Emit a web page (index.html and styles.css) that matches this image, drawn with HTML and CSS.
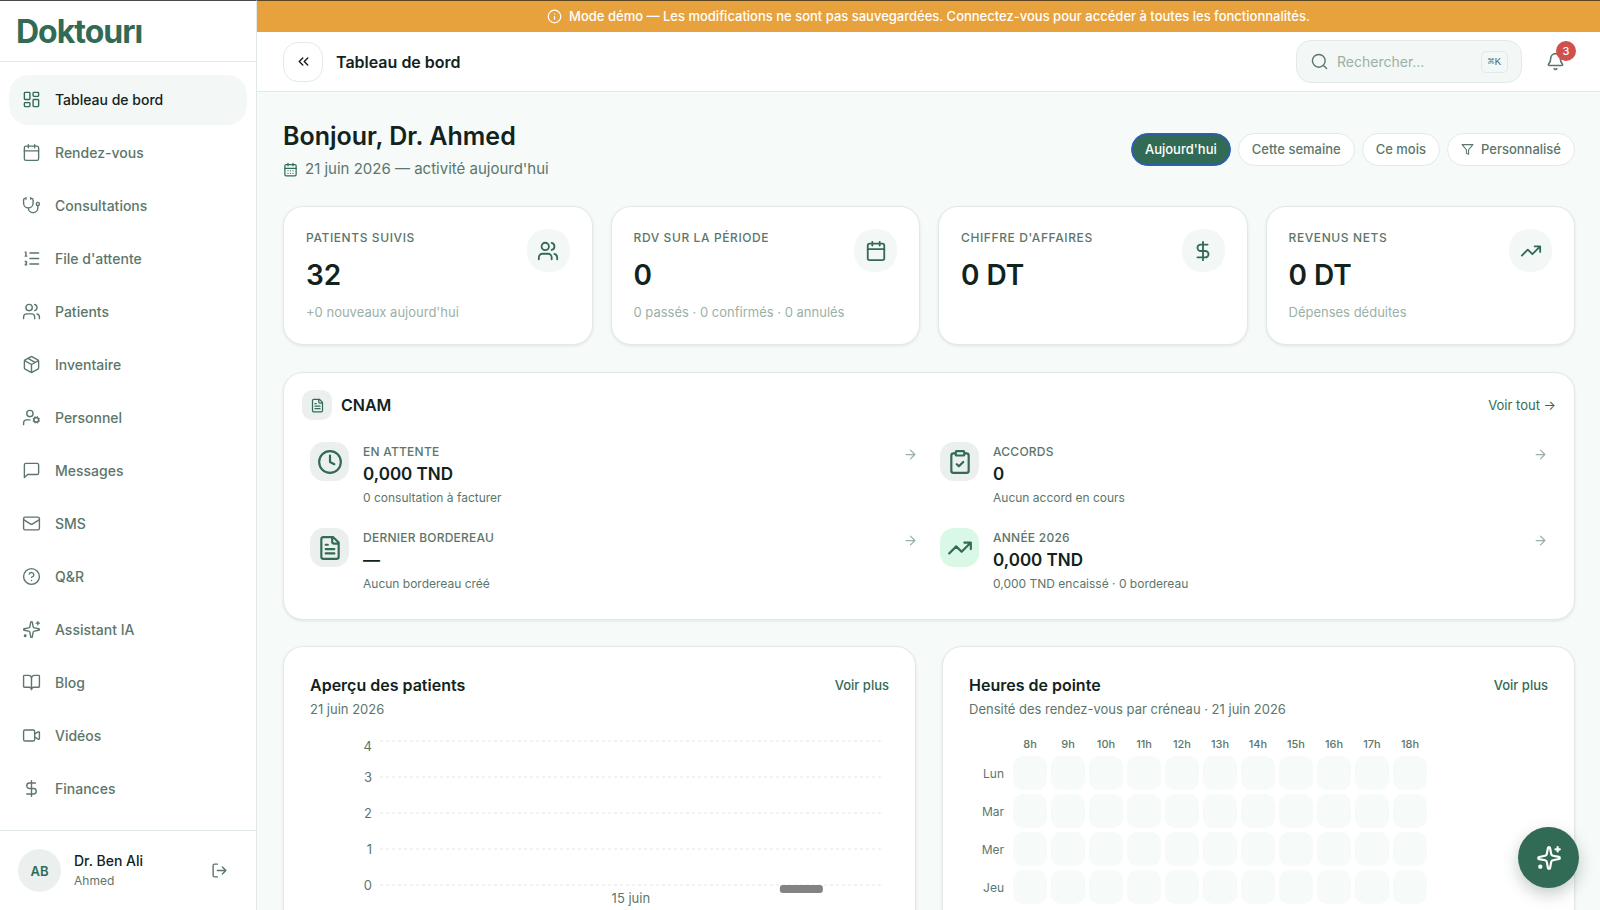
FILE: index.html
```html
<!DOCTYPE html>
<html lang="fr">
<head>
  <meta charset="UTF-8">
  <meta name="viewport" content="width=device-width, initial-scale=1">
  <title>Doktouri - Tableau de bord</title>
  <link rel="stylesheet" href="styles.css">
</head>
<body>
  <svg class="sprite" aria-hidden="true">
    <symbol id="i-dashboard" viewBox="0 0 24 24"><rect x="3" y="3" width="7" height="9" rx="1"/><rect x="14" y="3" width="7" height="5" rx="1"/><rect x="14" y="12" width="7" height="9" rx="1"/><rect x="3" y="16" width="7" height="5" rx="1"/></symbol>
    <symbol id="i-calendar" viewBox="0 0 24 24"><path d="M8 2v4M16 2v4M3 10h18"/><rect x="3" y="4" width="18" height="18" rx="2"/></symbol>
    <symbol id="i-calendar-days" viewBox="0 0 24 24"><path d="M8 2v4M16 2v4M3 10h18M8 14h.01M12 14h.01M16 14h.01M8 18h.01M12 18h.01M16 18h.01"/><rect x="3" y="4" width="18" height="18" rx="2"/></symbol>
    <symbol id="i-stethoscope" viewBox="0 0 24 24"><path d="M11 2v2M5 2v2M5 3H4a2 2 0 0 0-2 2v4a6 6 0 0 0 12 0V5a2 2 0 0 0-2-2h-1M8 15a6 6 0 0 0 12 0v-3"/><circle cx="20" cy="10" r="2"/></symbol>
    <symbol id="i-list" viewBox="0 0 24 24"><path d="M10 5h11M10 12h11M10 19h11M4 4h1v5M4 9h2M6 20H4c0-1 2-2 2-3s-1-2-2-1"/></symbol>
    <symbol id="i-users" viewBox="0 0 24 24"><path d="M16 21v-2a4 4 0 0 0-4-4H6a4 4 0 0 0-4 4v2M22 21v-2a4 4 0 0 0-3-3.87M16 3.13a4 4 0 0 1 0 7.75"/><circle cx="9" cy="7" r="4"/></symbol>
    <symbol id="i-package" viewBox="0 0 24 24"><path d="M11 21.73a2 2 0 0 0 2 0l7-4A2 2 0 0 0 21 16V8a2 2 0 0 0-1-1.73l-7-4a2 2 0 0 0-2 0l-7 4A2 2 0 0 0 3 8v8a2 2 0 0 0 1 1.73zM12 22V12M3.29 7 12 12l8.71-5M7.5 4.27l9 5.15"/></symbol>
    <symbol id="i-user-cog" viewBox="0 0 24 24"><circle cx="10" cy="7" r="4"/><path d="M10 15H6a4 4 0 0 0-4 4v2"/><circle cx="18" cy="15" r="3"/><path d="m21.7 16.4-.9-.3M15.2 13.9l-.9-.3M16.6 18.7l.3-.9M19.1 12.2l.3-.9M19.6 18.7l-.4-1M16.8 12.3l-.4-1M14.3 16.6l1-.4M20.7 13.8l1-.4"/></symbol>
    <symbol id="i-message" viewBox="0 0 24 24"><path d="M21 15a2 2 0 0 1-2 2H7l-4 4V5a2 2 0 0 1 2-2h14a2 2 0 0 1 2 2z"/></symbol>
    <symbol id="i-mail" viewBox="0 0 24 24"><rect x="2" y="4" width="20" height="16" rx="2"/><path d="m22 7-8.97 5.7a1.94 1.94 0 0 1-2.06 0L2 7"/></symbol>
    <symbol id="i-help" viewBox="0 0 24 24"><circle cx="12" cy="12" r="10"/><path d="M9.09 9a3 3 0 0 1 5.83 1c0 2-3 3-3 3M12 17h.01"/></symbol>
    <symbol id="i-sparkles" viewBox="0 0 24 24"><path d="M11.02 2.81a1 1 0 0 1 1.96 0l1.05 5.56a2 2 0 0 0 1.6 1.6l5.56 1.05a1 1 0 0 1 0 1.96l-5.56 1.05a2 2 0 0 0-1.6 1.6l-1.05 5.56a1 1 0 0 1-1.96 0l-1.05-5.56a2 2 0 0 0-1.6-1.6l-5.56-1.05a1 1 0 0 1 0-1.96l5.56-1.05a2 2 0 0 0 1.6-1.6zM20 2v4M22 4h-4"/><circle cx="4" cy="20" r="1"/></symbol>
    <symbol id="i-book" viewBox="0 0 24 24"><path d="M12 7v14M3 18a1 1 0 0 1-1-1V4a1 1 0 0 1 1-1h5a4 4 0 0 1 4 4 4 4 0 0 1 4-4h5a1 1 0 0 1 1 1v13a1 1 0 0 1-1 1h-6a3 3 0 0 0-3 3 3 3 0 0 0-3-3z"/></symbol>
    <symbol id="i-video" viewBox="0 0 24 24"><path d="m16 10 4.55-2.6A1 1 0 0 1 22 8.3v7.4a1 1 0 0 1-1.45.9L16 14"/><rect x="2" y="5" width="14" height="14" rx="2"/></symbol>
    <symbol id="i-dollar" viewBox="0 0 24 24"><path d="M12 2v20M17 5H9.5a3.5 3.5 0 0 0 0 7h5a3.5 3.5 0 0 1 0 7H6"/></symbol>
    <symbol id="i-logout" viewBox="0 0 24 24"><path d="M9 21H5a2 2 0 0 1-2-2V5a2 2 0 0 1 2-2h4M16 17l5-5-5-5M21 12H9"/></symbol>
    <symbol id="i-info" viewBox="0 0 24 24"><circle cx="12" cy="12" r="10"/><path d="M12 16v-4M12 8h.01"/></symbol>
    <symbol id="i-chevrons" viewBox="0 0 24 24"><path d="m11 17-5-5 5-5M18 17l-5-5 5-5"/></symbol>
    <symbol id="i-search" viewBox="0 0 24 24"><circle cx="11" cy="11" r="9"/><path d="m22 22-4.3-4.3"/></symbol>
    <symbol id="i-bell" viewBox="0 0 24 24"><path d="M10.27 21a2 2 0 0 0 3.46 0M3.26 15.33A1 1 0 0 0 4 17h16a1 1 0 0 0 .74-1.67C19.41 13.96 18 12.5 18 8A6 6 0 0 0 6 8c0 4.5-1.41 5.96-2.74 7.33"/></symbol>
    <symbol id="i-filter" viewBox="0 0 24 24"><path d="M22 3H2l8 9.46V19l4 2v-8.54z"/></symbol>
    <symbol id="i-trend" viewBox="0 0 24 24"><path d="M16 7h6v6M22 7l-8.5 8.5-5-5L2 17"/></symbol>
    <symbol id="i-file" viewBox="0 0 24 24"><path d="M15 2H6a2 2 0 0 0-2 2v16a2 2 0 0 0 2 2h12a2 2 0 0 0 2-2V7zM14 2v4a2 2 0 0 0 2 2h4M10 9H8M16 13H8M16 17H8"/></symbol>
    <symbol id="i-clock" viewBox="0 0 24 24"><circle cx="12" cy="12" r="10"/><path d="M12 6v6l4 2"/></symbol>
    <symbol id="i-clipboard" viewBox="0 0 24 24"><rect x="8" y="2" width="8" height="4" rx="1"/><path d="M16 4h2a2 2 0 0 1 2 2v14a2 2 0 0 1-2 2H6a2 2 0 0 1-2-2V6a2 2 0 0 1 2-2h2M9 14l2 2 4-4"/></symbol>
    <symbol id="i-arrow" viewBox="0 0 24 24"><path d="M5 12h14M12 5l7 7-7 7"/></symbol>
  </svg>

  <div class="app">
    <aside class="sidebar">
      <div class="brand"><a href="#" class="logo">Doktourı</a></div>
      <nav class="nav">
        <a href="#" class="nav-item active"><svg class="icon"><use href="#i-dashboard"/></svg>Tableau de bord</a>
        <a href="#" class="nav-item"><svg class="icon"><use href="#i-calendar"/></svg>Rendez-vous</a>
        <a href="#" class="nav-item"><svg class="icon"><use href="#i-stethoscope"/></svg>Consultations</a>
        <a href="#" class="nav-item"><svg class="icon"><use href="#i-list"/></svg>File d'attente</a>
        <a href="#" class="nav-item"><svg class="icon"><use href="#i-users"/></svg>Patients</a>
        <a href="#" class="nav-item"><svg class="icon"><use href="#i-package"/></svg>Inventaire</a>
        <a href="#" class="nav-item"><svg class="icon"><use href="#i-user-cog"/></svg>Personnel</a>
        <a href="#" class="nav-item"><svg class="icon"><use href="#i-message"/></svg>Messages</a>
        <a href="#" class="nav-item"><svg class="icon"><use href="#i-mail"/></svg>SMS</a>
        <a href="#" class="nav-item"><svg class="icon"><use href="#i-help"/></svg>Q&amp;R</a>
        <a href="#" class="nav-item"><svg class="icon"><use href="#i-sparkles"/></svg>Assistant IA</a>
        <a href="#" class="nav-item"><svg class="icon"><use href="#i-book"/></svg>Blog</a>
        <a href="#" class="nav-item"><svg class="icon"><use href="#i-video"/></svg>Vidéos</a>
        <a href="#" class="nav-item"><svg class="icon"><use href="#i-dollar"/></svg>Finances</a>
      </nav>
      <div class="user">
        <span class="avatar">AB</span>
        <div class="user-info">
          <div class="user-name">Dr. Ben Ali</div>
          <div class="user-sub">Ahmed</div>
        </div>
        <button class="icon-btn" aria-label="Se déconnecter"><svg class="icon"><use href="#i-logout"/></svg></button>
      </div>
    </aside>

    <div class="content">
      <div class="banner">
        <svg class="icon"><use href="#i-info"/></svg>
        <span>Mode démo — Les modifications ne sont pas sauvegardées. Connectez-vous pour accéder à toutes les fonctionnalités.</span>
      </div>

      <header class="topbar">
        <button class="toggle" aria-label="Réduire le menu"><svg class="icon"><use href="#i-chevrons"/></svg></button>
        <div class="topbar-title">Tableau de bord</div>
        <label class="search">
          <svg class="icon"><use href="#i-search"/></svg>
          <input type="text" placeholder="Rechercher..." aria-label="Rechercher">
          <kbd>⌘K</kbd>
        </label>
        <button class="icon-btn bell" aria-label="Notifications"><svg class="icon"><use href="#i-bell"/></svg><span class="badge">3</span></button>
      </header>

      <main class="main">
        <div class="page-head">
          <div>
            <h1>Bonjour, Dr. Ahmed</h1>
            <p class="date"><svg class="icon"><use href="#i-calendar-days"/></svg>21 juin 2026 — activité aujourd'hui</p>
          </div>
          <div class="filters">
            <button class="pill selected">Aujourd'hui</button>
            <button class="pill">Cette semaine</button>
            <button class="pill">Ce mois</button>
            <button class="pill"><svg class="icon"><use href="#i-filter"/></svg>Personnalisé</button>
          </div>
        </div>

        <section class="stats">
          <article class="card stat">
            <div>
              <div class="label">Patients suivis</div>
              <div class="stat-value">32</div>
              <div class="stat-note">+0 nouveaux aujourd'hui</div>
            </div>
            <span class="stat-icon"><svg class="icon"><use href="#i-users"/></svg></span>
          </article>
          <article class="card stat">
            <div>
              <div class="label">RDV sur la période</div>
              <div class="stat-value">0</div>
              <div class="stat-note">0 passés · 0 confirmés · 0 annulés</div>
            </div>
            <span class="stat-icon"><svg class="icon"><use href="#i-calendar"/></svg></span>
          </article>
          <article class="card stat">
            <div>
              <div class="label">Chiffre d'affaires</div>
              <div class="stat-value">0 DT</div>
            </div>
            <span class="stat-icon"><svg class="icon"><use href="#i-dollar"/></svg></span>
          </article>
          <article class="card stat">
            <div>
              <div class="label">Revenus nets</div>
              <div class="stat-value">0 DT</div>
              <div class="stat-note">Dépenses déduites</div>
            </div>
            <span class="stat-icon"><svg class="icon"><use href="#i-trend"/></svg></span>
          </article>
        </section>

        <section class="card cnam">
          <div class="cnam-head">
            <span class="cnam-badge"><svg class="icon"><use href="#i-file"/></svg></span>
            <h2>CNAM</h2>
            <a href="#" class="link">Voir tout →</a>
          </div>
          <div class="cnam-grid">
            <a href="#" class="cnam-item">
              <span class="tile"><svg class="icon"><use href="#i-clock"/></svg></span>
              <div class="cnam-text">
                <div class="label tight">En attente</div>
                <div class="cnam-value">0,000 TND</div>
                <div class="cnam-note">0 consultation à facturer</div>
              </div>
              <svg class="icon arrow"><use href="#i-arrow"/></svg>
            </a>
            <a href="#" class="cnam-item">
              <span class="tile"><svg class="icon"><use href="#i-clipboard"/></svg></span>
              <div class="cnam-text">
                <div class="label tight">Accords</div>
                <div class="cnam-value">0</div>
                <div class="cnam-note">Aucun accord en cours</div>
              </div>
              <svg class="icon arrow"><use href="#i-arrow"/></svg>
            </a>
            <a href="#" class="cnam-item">
              <span class="tile"><svg class="icon"><use href="#i-file"/></svg></span>
              <div class="cnam-text">
                <div class="label tight">Dernier bordereau</div>
                <div class="cnam-value">—</div>
                <div class="cnam-note">Aucun bordereau créé</div>
              </div>
              <svg class="icon arrow"><use href="#i-arrow"/></svg>
            </a>
            <a href="#" class="cnam-item">
              <span class="tile green"><svg class="icon"><use href="#i-trend"/></svg></span>
              <div class="cnam-text">
                <div class="label tight">Année 2026</div>
                <div class="cnam-value">0,000 TND</div>
                <div class="cnam-note">0,000 TND encaissé · 0 bordereau</div>
              </div>
              <svg class="icon arrow"><use href="#i-arrow"/></svg>
            </a>
          </div>
        </section>

        <section class="panels">
          <article class="card panel">
            <div class="panel-head">
              <h2>Aperçu des patients</h2>
              <a href="#" class="link strong">Voir plus</a>
            </div>
            <p class="panel-sub">21 juin 2026</p>
            <svg class="chart" role="img" aria-label="Patients par jour">
              <g class="chart-grid">
                <line x1="70" x2="100%" y1="9" y2="9"/>
                <line x1="70" x2="100%" y1="45" y2="45"/>
                <line x1="70" x2="100%" y1="81" y2="81"/>
                <line x1="70" x2="100%" y1="117" y2="117"/>
                <line x1="70" x2="100%" y1="153" y2="153"/>
              </g>
              <g class="chart-y">
                <text x="62" y="19">4</text>
                <text x="62" y="50">3</text>
                <text x="62" y="86">2</text>
                <text x="62" y="122">1</text>
                <text x="62" y="158">0</text>
              </g>
              <text class="chart-x" x="56%" y="171">15 juin</text>
              <rect class="chart-bar" x="82%" y="153" width="43" height="8" rx="3"/>
            </svg>
          </article>

          <article class="card panel">
            <div class="panel-head">
              <h2>Heures de pointe</h2>
              <a href="#" class="link strong">Voir plus</a>
            </div>
            <p class="panel-sub">Densité des rendez-vous par créneau · 21 juin 2026</p>
            <table class="heatmap">
              <thead>
                <tr><td></td><th>8h</th><th>9h</th><th>10h</th><th>11h</th><th>12h</th><th>13h</th><th>14h</th><th>15h</th><th>16h</th><th>17h</th><th>18h</th></tr>
              </thead>
              <tbody>
                <tr><th>Lun</th><td></td><td></td><td></td><td></td><td></td><td></td><td></td><td></td><td></td><td></td><td></td></tr>
                <tr><th>Mar</th><td></td><td></td><td></td><td></td><td></td><td></td><td></td><td></td><td></td><td></td><td></td></tr>
                <tr><th>Mer</th><td></td><td></td><td></td><td></td><td></td><td></td><td></td><td></td><td></td><td></td><td></td></tr>
                <tr><th>Jeu</th><td></td><td></td><td></td><td></td><td></td><td></td><td></td><td></td><td></td><td></td><td></td></tr>
              </tbody>
            </table>
          </article>
        </section>
      </main>
    </div>
  </div>

  <button class="fab" aria-label="Assistant IA"><svg class="icon"><use href="#i-sparkles"/></svg></button>
</body>
</html>
```
FILE: styles.css
```css
:root {
  --green: #326b55;
  --ink: #12231d;
  --muted: #5c766b;
  --faint: #9bb0a7;
  --line: #e2eae7;
  --bg: #f6faf9;
  --soft: #f3f7f5;
}
* {
  box-sizing: border-box;
}
body {
  margin: 0;
  font-family: Inter, "Liberation Sans", sans-serif;
  font-size: 14px;
  color: var(--ink);
  background: var(--bg);
}
h1, h2, p {
  margin: 0;
}
a {
  color: inherit;
  text-decoration: none;
}
button {
  font: inherit;
  color: inherit;
  border: none;
  background: none;
  padding: 0;
  cursor: pointer;
}
.sprite {
  display: none;
}
.icon {
  width: 19px;
  height: 19px;
  flex: none;
  fill: none;
  stroke: currentColor;
  stroke-width: 2;
  stroke-linecap: round;
  stroke-linejoin: round;
}
.app {
  display: flex;
  height: 100vh;
}

/* sidebar */
.sidebar {
  width: 257px;
  flex: none;
  display: flex;
  flex-direction: column;
  background: #fff;
  border-right: 1px solid var(--line);
  border-top: 1px solid #4a4a4a;
}
.brand {
  height: 61px;
  display: flex;
  align-items: center;
  padding: 0 16px;
  border-bottom: 1px solid var(--line);
}
.logo {
  font-size: 32px;
  font-weight: 700;
  letter-spacing: -1px;
  color: var(--green);
}
.nav {
  flex: 1;
  display: flex;
  flex-direction: column;
  gap: 3px;
  padding: 13px 9px;
  overflow: hidden;
}
.nav-item {
  height: 50px;
  flex: none;
  display: flex;
  align-items: center;
  gap: 14px;
  padding: 0 13px 1px;
  border-radius: 20px;
  font-size: 14px;
  font-weight: 500;
  color: var(--muted);
}
.nav-item .icon {
  stroke-width: 1.75;
}
.nav-item.active {
  background: var(--soft);
  color: var(--ink);
}
.nav-item.active .icon {
  color: var(--green);
}
.user {
  height: 80px;
  display: flex;
  align-items: center;
  gap: 13px;
  padding: 0 28px 0 18px;
  border-top: 1px solid var(--line);
}
.avatar {
  width: 43px;
  height: 43px;
  display: grid;
  place-items: center;
  border-radius: 50%;
  background: #ebf0ee;
  color: var(--green);
  font-size: 13px;
  font-weight: 600;
}
.user-info {
  flex: 1;
}
.user-name {
  font-size: 14px;
  font-weight: 500;
  line-height: 20px;
}
.user-sub {
  font-size: 12px;
  line-height: 20px;
  color: var(--muted);
}
.icon-btn {
  display: flex;
  color: var(--muted);
}
.user .icon {
  width: 17px;
  height: 17px;
}

/* top of the page */
.content {
  flex: 1;
  min-width: 0;
  display: flex;
  flex-direction: column;
}
.banner {
  height: 32px;
  flex: none;
  display: flex;
  align-items: center;
  justify-content: center;
  gap: 7px;
  padding-bottom: 1px;
  background: #e8a23d;
  border-top: 1px solid #5b4520;
  color: #fff;
  font-size: 13px;
  font-weight: 500;
}
.banner .icon {
  width: 15px;
  height: 15px;
}
.topbar {
  height: 60px;
  flex: none;
  display: flex;
  align-items: center;
  padding: 0 25px 0 26px;
  background: #fff;
  border-bottom: 1px solid var(--line);
}
.toggle {
  width: 40px;
  height: 40px;
  display: grid;
  place-items: center;
  border: 1px solid var(--line);
  border-radius: 15px;
}
.toggle .icon {
  width: 17px;
  height: 17px;
}
.topbar-title {
  flex: 1;
  margin-left: 13px;
  font-size: 16px;
  font-weight: 600;
}
.search {
  width: 226px;
  height: 43px;
  display: flex;
  align-items: center;
  gap: 9px;
  padding: 0 13px 0 14px;
  background: var(--soft);
  border: 1px solid var(--line);
  border-radius: 15px;
  color: var(--muted);
}
.search .icon {
  width: 17px;
  height: 17px;
}
.search input {
  flex: 1;
  min-width: 0;
  padding: 0;
  border: none;
  outline: none;
  background: none;
  font: inherit;
  color: var(--ink);
}
.search input::placeholder {
  color: var(--faint);
}
.search kbd {
  padding: 2px 6px;
  border: 1px solid var(--line);
  border-radius: 5px;
  font-family: "Liberation Mono", "DejaVu Sans Mono", monospace;
  font-size: 11px;
  line-height: 16px;
}
.bell {
  position: relative;
  margin: 0 10px 0 24px;
}
.badge {
  position: absolute;
  top: -11px;
  right: -11px;
  width: 20px;
  height: 20px;
  border-radius: 50%;
  background: #d0504c;
  color: #fff;
  font-size: 11px;
  font-weight: 500;
  line-height: 20px;
}

/* main area */
.main {
  flex: 1;
  min-height: 0;
  overflow-y: auto;
  scrollbar-width: none;
  padding: 26px 25px 26px 26px;
}
.page-head {
  display: flex;
  align-items: center;
  justify-content: space-between;
  margin-bottom: 25px;
}
h1 {
  font-size: 25px;
  font-weight: 600;
  line-height: 36px;
}
.date {
  display: flex;
  align-items: center;
  gap: 7px;
  margin-top: 3px;
  font-size: 15px;
  line-height: 24px;
  color: var(--muted);
}
.date .icon {
  width: 15px;
  height: 15px;
  color: var(--green);
}
.filters {
  display: flex;
  gap: 7px;
}
.pill {
  height: 33px;
  display: flex;
  align-items: center;
  gap: 7px;
  padding: 0 13px 1px;
  background: #fff;
  border: 1px solid var(--line);
  border-radius: 17px;
  font-size: 13px;
  font-weight: 500;
  color: var(--muted);
}
.pill .icon {
  width: 13px;
  height: 13px;
}
.pill.selected {
  background: var(--green);
  border-color: #2c5fc4;
  box-shadow: inset 0 0 0 1px #2a5fa5;
  color: #fff;
}
.card {
  background: #fff;
  border: 1px solid var(--line);
  border-radius: 20px;
  box-shadow: 0 1px 3px rgba(18, 50, 38, 0.1);
}
.label {
  font-size: 12px;
  font-weight: 500;
  line-height: 18px;
  letter-spacing: 0.05em;
  text-transform: uppercase;
  color: var(--muted);
}
.label.tight {
  letter-spacing: 0.02em;
}

.stats {
  display: grid;
  grid-template-columns: repeat(4, 1fr);
  gap: 18px;
  margin-bottom: 27px;
}
.stat {
  height: 139px;
  display: flex;
  justify-content: space-between;
  padding: 22px;
}
.stat-value {
  margin-top: 10px;
  font-size: 28px;
  font-weight: 600;
  line-height: 36px;
}
.stat-note {
  margin-top: 10px;
  font-size: 13px;
  line-height: 18px;
  color: var(--faint);
}
.stat-icon {
  width: 43px;
  height: 43px;
  display: grid;
  place-items: center;
  border-radius: 20px;
  background: var(--soft);
  color: var(--green);
}
.stat-icon .icon {
  width: 22px;
  height: 22px;
}

.cnam {
  padding: 17px 18px 20px;
  margin-bottom: 26px;
}
.cnam-head {
  display: flex;
  align-items: center;
  gap: 9px;
  margin-bottom: 13px;
}
.cnam-badge {
  width: 30px;
  height: 30px;
  display: grid;
  place-items: center;
  border-radius: 10px;
  background: #ebf0ee;
  color: var(--green);
}
.cnam-badge .icon {
  width: 15px;
  height: 15px;
}
h2 {
  flex: 1;
  font-size: 16px;
  font-weight: 600;
  line-height: 24px;
}
.link {
  font-size: 13px;
  color: var(--green);
}
.link.strong {
  font-weight: 500;
}
.cnam-grid {
  display: grid;
  grid-template-columns: 1fr 1fr;
  gap: 6px;
}
.cnam-item {
  height: 80px;
  display: flex;
  gap: 14px;
  padding: 9px 8px;
}
.tile {
  width: 39px;
  height: 39px;
  display: grid;
  place-items: center;
  border-radius: 14px;
  background: #ebf0ee;
  color: var(--green);
}
.tile.green {
  background: #d9f8e6;
}
.tile .icon {
  width: 26px;
  height: 26px;
}
.cnam-text {
  flex: 1;
  padding-top: 1px;
}
.cnam-value {
  font-size: 17px;
  font-weight: 600;
  line-height: 27px;
}
.cnam-note {
  font-size: 12px;
  line-height: 20px;
  color: var(--muted);
}
.arrow {
  width: 15px;
  height: 15px;
  margin-top: 5px;
  color: var(--faint);
}

.panels {
  display: grid;
  grid-template-columns: 1fr 1fr;
  gap: 26px;
}
.panel {
  padding: 26px;
}
.panel-head {
  display: flex;
  align-items: center;
}
.panel-sub {
  margin-top: 2px;
  font-size: 13px;
  line-height: 20px;
  color: var(--muted);
}
.chart {
  display: block;
  width: 100%;
  height: 190px;
  margin-top: 13px;
  padding-right: 6px;
  font-size: 13px;
}
.chart text {
  fill: var(--muted);
}
.chart-grid line {
  stroke: #dfe7e4;
  stroke-dasharray: 3 3;
}
.chart-y text {
  text-anchor: end;
}
.chart-x {
  text-anchor: middle;
}
.chart-bar {
  fill: #838383;
}
.heatmap {
  margin-top: 12px;
  border-spacing: 4px;
  font-size: 12px;
  color: var(--muted);
}
.heatmap th {
  padding: 0;
  font-weight: 400;
}
.heatmap thead th {
  height: 17px;
  font-size: 11px;
  font-weight: 500;
}
.heatmap tbody th {
  width: 36px;
  padding-right: 5px;
  text-align: right;
}
.heatmap tbody td {
  width: 34px;
  height: 34px;
  padding: 0;
  border-radius: 10px;
  background: var(--bg);
}

.fab {
  position: fixed;
  right: 21px;
  bottom: 22px;
  width: 61px;
  height: 61px;
  display: grid;
  place-items: center;
  border-radius: 50%;
  background: var(--green);
  color: #fff;
  box-shadow: 0 6px 16px rgba(18, 50, 38, 0.25);
}
.fab .icon {
  width: 26px;
  height: 26px;
}
```
